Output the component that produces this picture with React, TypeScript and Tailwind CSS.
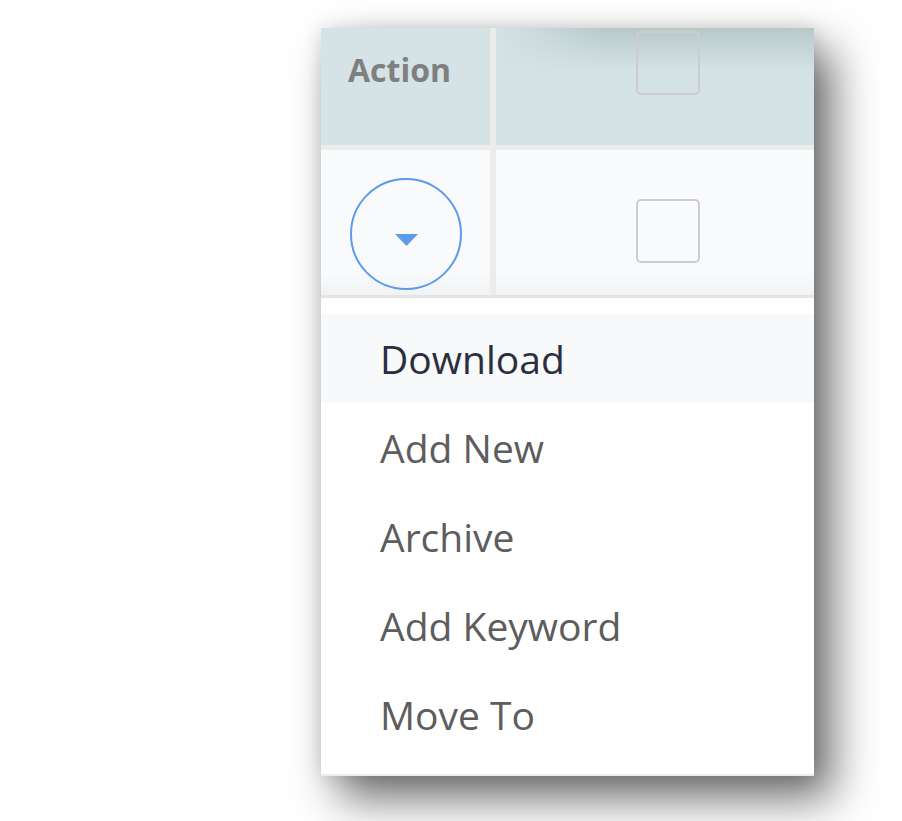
import React from "react";

const items = ["Download", "Add New", "Archive", "Add Keyword", "Move To"];

const Checkbox: React.FC<{ className?: string }> = ({ className = "" }) => (
  <div className={`w-[64px] h-[64px] rounded-[5px] border-2 border-[#cdcdcd] ${className}`} />
);

const App: React.FC = () => {
  return (
    <div className="w-full h-[821px] bg-white pt-[28px] pl-[321px] font-['Open_Sans',sans-serif]">
      <div className="w-[493px] h-[748px] bg-white flex flex-col shadow-[0_0_18px_rgba(0,0,0,0.12),18px_22px_42px_rgba(0,0,0,0.58)]">
        {/* header row */}
        <div className="flex h-[117px] bg-[#ececec]">
          <div className="w-[169px] bg-[#d5e3e6] pl-[27px] pt-[26px]">
            <span className="text-[32px] leading-none font-bold text-[#7f7f7f]">Action</span>
          </div>
          <div className="ml-[6px] flex-1 bg-[linear-gradient(to_right,#d4e2e5,transparent_110px),linear-gradient(to_bottom,#b8c8c9,#d4e2e5_42px)]">
            <Checkbox className="ml-[140px] mt-[3px]" />
          </div>
        </div>
        <div className="h-[5px] bg-[#ececec]" />

        {/* first row */}
        <div className="flex h-[145px] bg-[#ececec]">
          <div className="w-[169px] bg-[linear-gradient(to_bottom,#f9fafc_85%,#f1f2f4)] pl-[29px] pt-[28px]">
            <button className="w-[112px] h-[112px] rounded-full border-2 border-[#5b9be9] flex flex-col items-center justify-center">
              <svg width="23" height="12" viewBox="0 0 23 12" className="mt-[12px]">
                <polygon points="0,0 23,0 11.5,12" fill="#5b9be9" />
              </svg>
            </button>
          </div>
          <div className="ml-[6px] flex-1 bg-[linear-gradient(to_bottom,#f9fafc_85%,#f1f2f4)]">
            <Checkbox className="ml-[140px] mt-[49px]" />
          </div>
        </div>
        <div className="h-[3px] bg-[#e4e4e4]" />

        {/* dropdown menu */}
        <div className="pt-[16px] flex-1 flex flex-col">
          {items.map((label, i) => (
            <div
              key={label}
              className={`h-[89px] flex items-center pl-[59px] text-[39px] leading-none ${
                i === 0 ? "bg-[#f8f9fb] text-[#2a2e3d]" : "text-[#5d5d5d]"
              }`}
            >
              {label}
            </div>
          ))}
          <div className="flex-1" />
          <div className="h-[2px] bg-[#ececec]" />
        </div>
      </div>
    </div>
  );
};

export default App;
